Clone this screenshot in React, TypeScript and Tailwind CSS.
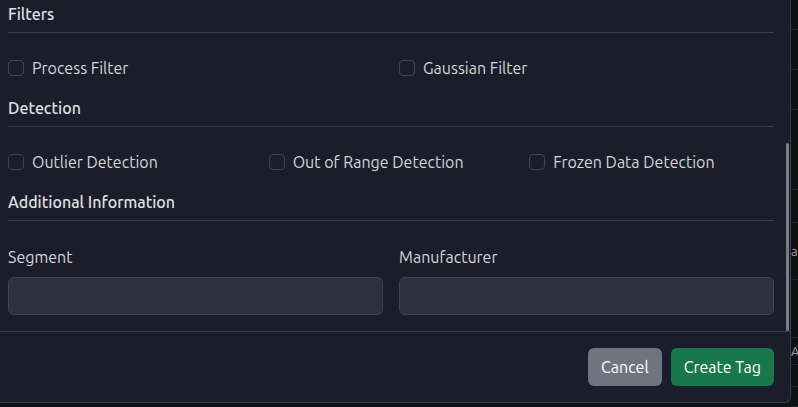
import React from 'react';

const filters = ['Process Filter', 'Gaussian Filter'];
const detections = ['Outlier Detection', 'Out of Range Detection', 'Frozen Data Detection'];

function SectionTitle({ children }: { children: React.ReactNode }) {
    return (
        <h6 className="text-[16px] leading-6 font-medium text-[#dfe1e4] pb-[6px] border-b border-[#3a3e4c]">
            {children}
        </h6>
    );
}

function Check({ label }: { label: string }) {
    return (
        <label className="flex items-center gap-2 h-6 text-[16px] text-[#d4d6da]">
            <span className="w-4 h-4 rounded-[4px] border border-[#404453] bg-[#1b1d2a] shrink-0" />
            {label}
        </label>
    );
}

function Field({ label }: { label: string }) {
    return (
        <div>
            <div className="text-[16px] leading-6 text-[#d4d6da] mb-2">{label}</div>
            <input className="block w-full h-[38px] rounded-md bg-[#2c313d] border border-[#3f4453] outline-none" />
        </div>
    );
}

export default function App() {
    const rows = [30, 40, 40, 80, 33, 57, 58, 27, 22, 20];
    return (
        <div className="flex w-[798px] h-[407px] overflow-hidden bg-[#101116] font-['Ubuntu','Noto_Sans',sans-serif]">
            {/* Modal */}
            <div className="flex flex-col w-[791px] h-[403px] shrink-0 bg-[#1b1d2a] border-r border-b border-[#3a3d4a] rounded-br-md">
                <div className="relative flex-1 pt-[2px] pl-2 pr-4 pb-4">
                    <SectionTitle>Filters</SectionTitle>
                    <div className="grid grid-cols-2 gap-4 mt-[23px]">
                        {filters.map(f => <Check key={f} label={f} />)}
                    </div>

                    <div className="mt-4">
                        <SectionTitle>Detection</SectionTitle>
                    </div>
                    <div className="grid grid-cols-3 gap-4 mt-[23px]">
                        {detections.map(d => <Check key={d} label={d} />)}
                    </div>

                    <div className="mt-4">
                        <SectionTitle>Additional Information</SectionTitle>
                    </div>
                    <div className="grid grid-cols-2 gap-4 mt-6">
                        <Field label="Segment" />
                        <Field label="Manufacturer" />
                    </div>

                    {/* scrollbar thumb */}
                    <div className="absolute right-[1px] top-[143px] bottom-0 w-[3px] rounded-full bg-[#7b7d82]" />
                </div>

                <div className="flex justify-end gap-[9px] py-4 pr-4 border-t border-[#3a3d4a]">
                    <button className="h-[38px] px-[13px] rounded-md bg-[#6f757e] text-[16px] text-white">Cancel</button>
                    <button className="h-[38px] px-[13px] rounded-md bg-[#19784a] text-[16px] text-white">Create Tag</button>
                </div>
            </div>

            {/* page behind the modal */}
            <div className="flex-1 flex flex-col text-[13px] text-[#9a9ca3] leading-none">
                {rows.map((h, i) => (
                    <div key={i} style={{ height: h }} className="border-b border-[#24262d] flex items-center overflow-hidden">
                        {i === 5 ? 'a' : i === 7 ? 'A' : ''}
                    </div>
                ))}
            </div>
        </div>
    );
}
